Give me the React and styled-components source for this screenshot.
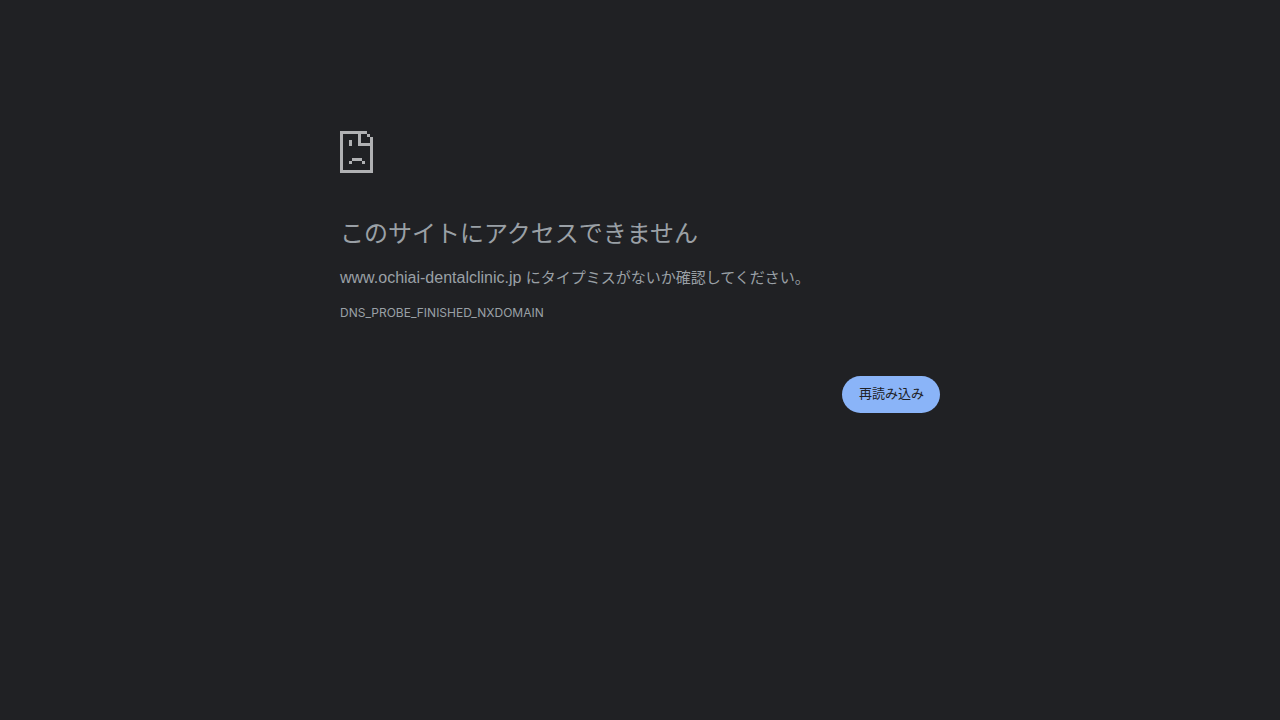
import React from 'react';
import styled, { createGlobalStyle } from 'styled-components';

const COLOR_BACKGROUND = '#202124';
const COLOR_TEXT = '#9aa0a6';
const COLOR_ICON = '#b0b1b3';
const COLOR_BUTTON = '#8ab4f8';

const GlobalStyle = createGlobalStyle`
  body {
    background-color: ${COLOR_BACKGROUND};
    color: ${COLOR_TEXT};
    font-family: Inter, 'Noto Sans CJK JP', sans-serif;
    font-size: 15px;
    margin: 0;
  }
`;

const Page = styled.main`
  box-sizing: border-box;
  margin: 0 auto;
  max-width: 632px;
  padding: 131px 16px 48px;
`;

const PageIcon = styled.svg`
  color: ${COLOR_ICON};
  display: block;
  height: 42px;
  margin-bottom: 45px;
  width: 33px;
`;

const Title = styled.h1`
  font-size: 24px;
  font-weight: 400;
  line-height: 32px;
  margin: 0 0 16px;
`;

const Summary = styled.p`
  line-height: 24px;
  margin: 0 0 11px;
`;

const HostName = styled.span`
  font-family: 'Liberation Sans', sans-serif;
  font-size: 16px;
`;

const ErrorCode = styled.p`
  font-size: 12px;
  line-height: 24px;
  margin: 0;
`;

const Actions = styled.div`
  display: flex;
  justify-content: flex-end;
  margin-top: 51px;
`;

const ReloadButton = styled.button`
  background-color: ${COLOR_BUTTON};
  border: 0;
  border-radius: 20px;
  color: ${COLOR_BACKGROUND};
  cursor: pointer;
  font-family: inherit;
  font-size: 13px;
  line-height: 21px;
  padding: 7px 16px 9px 17px;

  &:hover {
    background-color: #aecbfa;
  }
`;

const SadPageIcon = () => (
  <PageIcon viewBox="0 0 33 42" shapeRendering="crispEdges" fill="currentColor" aria-hidden="true">
    <path d="M0 0h27v3h-6v9h9V6h3v36H0V0zM3 3v36h27V15H18V3H3z" fillRule="evenodd" />
    <path d="M27 3h3v3h-3zM9 9h3v6H9z" />
    <path d="M12 27h10v3H12zM9 30h3v3H9zM22 30h3v3h-3z" />
  </PageIcon>
);

const App = () => (
  <>
    <GlobalStyle />
    <Page lang="ja">
      <SadPageIcon />
      <Title>このサイトにアクセスできません</Title>
      <Summary>
        <HostName>www.ochiai-dentalclinic.jp</HostName> にタイプミスがないか確認してください。
      </Summary>
      <ErrorCode>DNS_PROBE_FINISHED_NXDOMAIN</ErrorCode>
      <Actions>
        <ReloadButton type="button" onClick={() => window.location.reload()}>
          再読み込み
        </ReloadButton>
      </Actions>
    </Page>
  </>
);

export default App;
